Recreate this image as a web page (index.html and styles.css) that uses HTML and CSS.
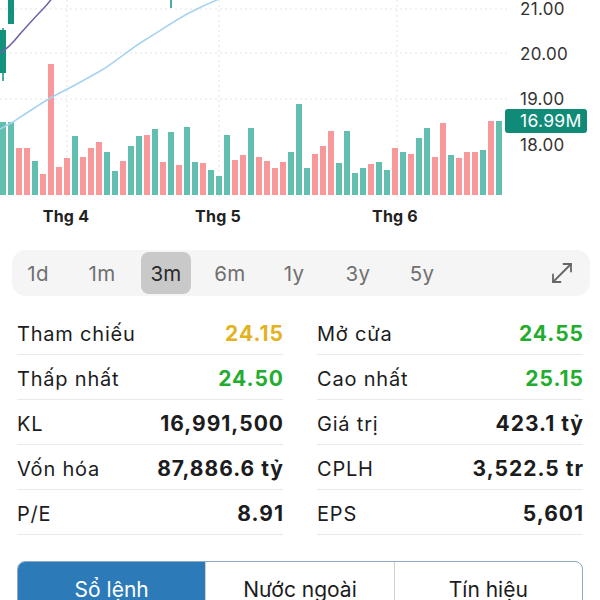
FILE: index.html
```html
<!DOCTYPE html>
<html lang="vi">
<head>
<meta charset="utf-8">
<link rel="stylesheet" href="styles.css">
</head>
<body>
<div class="chart">
<svg class="chart-svg" width="600" height="250" viewBox="0 0 600 250">
  <g class="grid">
    <line x1="0" y1="9" x2="510" y2="9"/>
    <line x1="0" y1="53" x2="510" y2="53"/>
    <line x1="0" y1="99" x2="510" y2="99"/>
    <line x1="67" y1="0" x2="67" y2="200"/>
    <line x1="219" y1="0" x2="219" y2="200"/>
    <line x1="397" y1="0" x2="397" y2="200"/>
  </g>
  <g class="bars">
    <rect class="up" x="0" y="122" width="6" height="73"/>
    <rect class="up" x="8" y="122" width="6" height="73"/>
    <rect class="dn" x="16" y="148" width="6" height="47"/>
    <rect class="dn" x="24" y="148" width="6" height="47"/>
    <rect class="up" x="32" y="161" width="6" height="34"/>
    <rect class="dn" x="40" y="174" width="6" height="21"/>
    <rect class="dn" x="48" y="64" width="6" height="131"/>
    <rect class="dn" x="56" y="167" width="6" height="28"/>
    <rect class="dn" x="64" y="158" width="6" height="37"/>
    <rect class="up" x="72" y="136" width="6" height="59"/>
    <rect class="dn" x="80" y="157" width="6" height="38"/>
    <rect class="dn" x="88" y="148" width="6" height="47"/>
    <rect class="dn" x="96" y="142" width="6" height="53"/>
    <rect class="up" x="104" y="152" width="6" height="43"/>
    <rect class="up" x="112" y="171" width="6" height="24"/>
    <rect class="dn" x="120" y="161" width="6" height="34"/>
    <rect class="up" x="128" y="146" width="6" height="49"/>
    <rect class="up" x="136" y="136" width="6" height="59"/>
    <rect class="dn" x="144" y="135" width="6" height="60"/>
    <rect class="up" x="152" y="129" width="6" height="66"/>
    <rect class="dn" x="160" y="162" width="6" height="33"/>
    <rect class="up" x="168" y="132" width="6" height="63"/>
    <rect class="dn" x="176" y="165" width="6" height="30"/>
    <rect class="up" x="184" y="127" width="6" height="68"/>
    <rect class="up" x="192" y="162" width="6" height="33"/>
    <rect class="dn" x="200" y="163" width="6" height="32"/>
    <rect class="up" x="208" y="170" width="6" height="25"/>
    <rect class="up" x="216" y="176" width="6" height="19"/>
    <rect class="up" x="224" y="135" width="6" height="60"/>
    <rect class="dn" x="232" y="160" width="6" height="35"/>
    <rect class="dn" x="240" y="155" width="6" height="40"/>
    <rect class="up" x="248" y="128" width="6" height="67"/>
    <rect class="dn" x="256" y="157" width="6" height="38"/>
    <rect class="dn" x="264" y="161" width="6" height="34"/>
    <rect class="dn" x="272" y="168" width="6" height="27"/>
    <rect class="dn" x="280" y="162" width="6" height="33"/>
    <rect class="up" x="288" y="152" width="6" height="43"/>
    <rect class="up" x="296" y="104" width="6" height="91"/>
    <rect class="up" x="304" y="168" width="6" height="27"/>
    <rect class="dn" x="312" y="154" width="6" height="41"/>
    <rect class="dn" x="320" y="146" width="6" height="49"/>
    <rect class="dn" x="328" y="131" width="6" height="64"/>
    <rect class="up" x="336" y="163" width="6" height="32"/>
    <rect class="up" x="344" y="131" width="6" height="64"/>
    <rect class="up" x="352" y="173" width="6" height="22"/>
    <rect class="up" x="360" y="168" width="6" height="27"/>
    <rect class="dn" x="368" y="164" width="6" height="31"/>
    <rect class="up" x="376" y="162" width="6" height="33"/>
    <rect class="up" x="384" y="170" width="6" height="25"/>
    <rect class="dn" x="392" y="148" width="6" height="47"/>
    <rect class="up" x="400" y="152" width="6" height="43"/>
    <rect class="dn" x="408" y="154" width="6" height="41"/>
    <rect class="up" x="416" y="138" width="6" height="57"/>
    <rect class="up" x="424" y="128" width="6" height="67"/>
    <rect class="dn" x="432" y="157" width="6" height="38"/>
    <rect class="dn" x="440" y="123" width="6" height="72"/>
    <rect class="up" x="448" y="155" width="6" height="40"/>
    <rect class="dn" x="456" y="158" width="6" height="37"/>
    <rect class="dn" x="464" y="152" width="6" height="43"/>
    <rect class="dn" x="472" y="152" width="6" height="43"/>
    <rect class="up" x="480" y="150" width="6" height="45"/>
    <rect class="dn" x="488" y="121" width="6" height="74"/>
    <rect class="up" x="496" y="121" width="6" height="74"/>
  </g>
  <g class="candles">
    <line x1="3" y1="28" x2="3" y2="81"/>
    <rect x="0" y="30" width="6" height="43"/>
    <rect x="8" y="-2" width="6" height="26"/>
    <line x1="171" y1="-2" x2="171" y2="8"/>
  </g>
  <path class="ma-slow" d="M0,129 L13,122 C25,114 40,104 52,97 C70,88 88,78 102,70 C118,60 130,49 145,40 C160,31 178,18 195,10 C205,5 214,1 224,-3"/>
  <path class="ma-fast" d="M0,53 C6,50 12,44 20,34 C28,25 36,16 43,9 C47,5 50,1 53,-3"/>
  <g class="axis">
    <text x="520" y="15">21.00</text>
    <text x="520" y="60">20.00</text>
    <text x="520" y="105">19.00</text>
    <text x="520" y="151">18.00</text>
  </g>
  <rect class="last-box" x="505" y="109" width="82" height="24" rx="3"/>
  <text class="last-text" x="520" y="127">16.99M</text>
  <g class="months">
    <text x="66" y="222">Thg 4</text>
    <text x="218" y="222">Thg 5</text>
    <text x="395" y="222">Thg 6</text>
  </g>
</svg>
</div>

<div class="periods">
  <span class="period">1d</span>
  <span class="period">1m</span>
  <span class="period selected">3m</span>
  <span class="period">6m</span>
  <span class="period">1y</span>
  <span class="period">3y</span>
  <span class="period">5y</span>
  <span class="spacer"></span>
  <svg class="expand" width="24" height="24" viewBox="0 0 24 24">
    <line x1="3" y1="21" x2="21" y2="3"/>
    <polyline points="13.5,3 21,3 21,10.5"/>
    <polyline points="3,13.5 3,21 10.5,21"/>
  </svg>
</div>

<div class="stats">
  <div class="col">
    <div class="row"><span class="label">Tham chiếu</span><span class="value ref">24.15</span></div>
    <div class="row"><span class="label">Thấp nhất</span><span class="value up">24.50</span></div>
    <div class="row"><span class="label">KL</span><span class="value">16,991,500</span></div>
    <div class="row"><span class="label">Vốn hóa</span><span class="value">87,886.6 tỷ</span></div>
    <div class="row"><span class="label">P/E</span><span class="value">8.91</span></div>
  </div>
  <div class="col">
    <div class="row"><span class="label">Mở cửa</span><span class="value up">24.55</span></div>
    <div class="row"><span class="label">Cao nhất</span><span class="value up">25.15</span></div>
    <div class="row"><span class="label">Giá trị</span><span class="value">423.1 tỷ</span></div>
    <div class="row"><span class="label">CPLH</span><span class="value">3,522.5 tr</span></div>
    <div class="row"><span class="label">EPS</span><span class="value">5,601</span></div>
  </div>
</div>

<div class="tabs">
  <div class="tab active">Sổ lệnh</div>
  <div class="tab">Nước ngoài</div>
  <div class="tab">Tín hiệu</div>
</div>
</body>
</html>
```
FILE: styles.css
```css
html, body {
  margin: 0;
  padding: 0;
  background: #ffffff;
}
body {
  font-family: Inter, "Noto Sans", "DejaVu Sans", sans-serif;
  color: #1c1c1e;
  width: 600px;
  height: 600px;
  overflow: hidden;
}
.chart {
  height: 250px;
}
.chart-svg {
  display: block;
}
.grid line {
  stroke: #e4e4e4;
  stroke-width: 1;
  stroke-dasharray: 2 3;
}
.bars .up { fill: #62bfb0; }
.bars .dn { fill: #f7989a; }
.candles rect { fill: #12917d; }
.candles line { stroke: #12917d; stroke-width: 1.5; }
.ma-slow {
  fill: none;
  stroke: #a6d3f1;
  stroke-width: 1.5;
}
.ma-fast {
  fill: none;
  stroke: #6e5fa8;
  stroke-width: 1.5;
}
.axis text {
  font-family: Inter, "Noto Sans", sans-serif;
  font-size: 17px;
  letter-spacing: 0.3px;
  fill: #333333;
}
.last-box { fill: #0f8b78; }
.last-text {
  font-family: Inter, "Noto Sans", sans-serif;
  font-size: 17.5px;
  letter-spacing: 0.3px;
  fill: #ffffff;
}
.months text {
  font-family: Inter, "Noto Sans", sans-serif;
  font-size: 16px;
  font-weight: 700;
  letter-spacing: 0.2px;
  fill: #222222;
  text-anchor: middle;
}

.periods {
  margin: 0 10px 0 12px;
  height: 46px;
  box-sizing: border-box;
  padding: 2px 16px 2px 1px;
  background: #f5f5f5;
  border-radius: 14px;
  display: flex;
  align-items: center;
  gap: 14px;
}
.period {
  width: 50px;
  height: 42px;
  border-radius: 8px;
  display: flex;
  align-items: center;
  justify-content: center;
  font-size: 20.5px;
  letter-spacing: 0.3px;
  color: #707070;
}
.period.selected {
  background: #c9c9c9;
  color: #2a2a2a;
}
.spacer { flex: 1; }
.expand {
  fill: none;
  stroke: #666666;
  stroke-width: 1.8;
  stroke-linecap: round;
  stroke-linejoin: round;
}

.stats {
  margin: 14px 17px 0;
  display: grid;
  grid-template-columns: 1fr 1fr;
  column-gap: 34px;
}
.row {
  height: 44px;
  box-sizing: border-box;
  padding-top: 3px;
  border-bottom: 1px solid #e9e9e9;
  display: flex;
  align-items: center;
  justify-content: space-between;
}
.row { height: 45px; }
.label {
  font-size: 20px;
  letter-spacing: 0.8px;
  color: #1c1c1e;
}
.value {
  font-size: 21px;
  letter-spacing: 1px;
  font-weight: 700;
  color: #1c1c1e;
  margin-right: -1px;
}
.value.ref { color: #e3b21e; }
.value.up { color: #22ad2e; }

.tabs {
  margin: 26px 17px 0;
  height: 54px;
  display: flex;
  border: 1px solid #8eaac4;
  border-radius: 8px;
  overflow: hidden;
}
.tab {
  flex: 1;
  display: flex;
  align-items: center;
  justify-content: center;
  font-size: 21px;
  color: #1c1c1e;
  border-left: 1px solid #cfcfcf;
}
.tab.active {
  background: #2c7bb8;
  color: #ffffff;
  border-left: none;
}
```
